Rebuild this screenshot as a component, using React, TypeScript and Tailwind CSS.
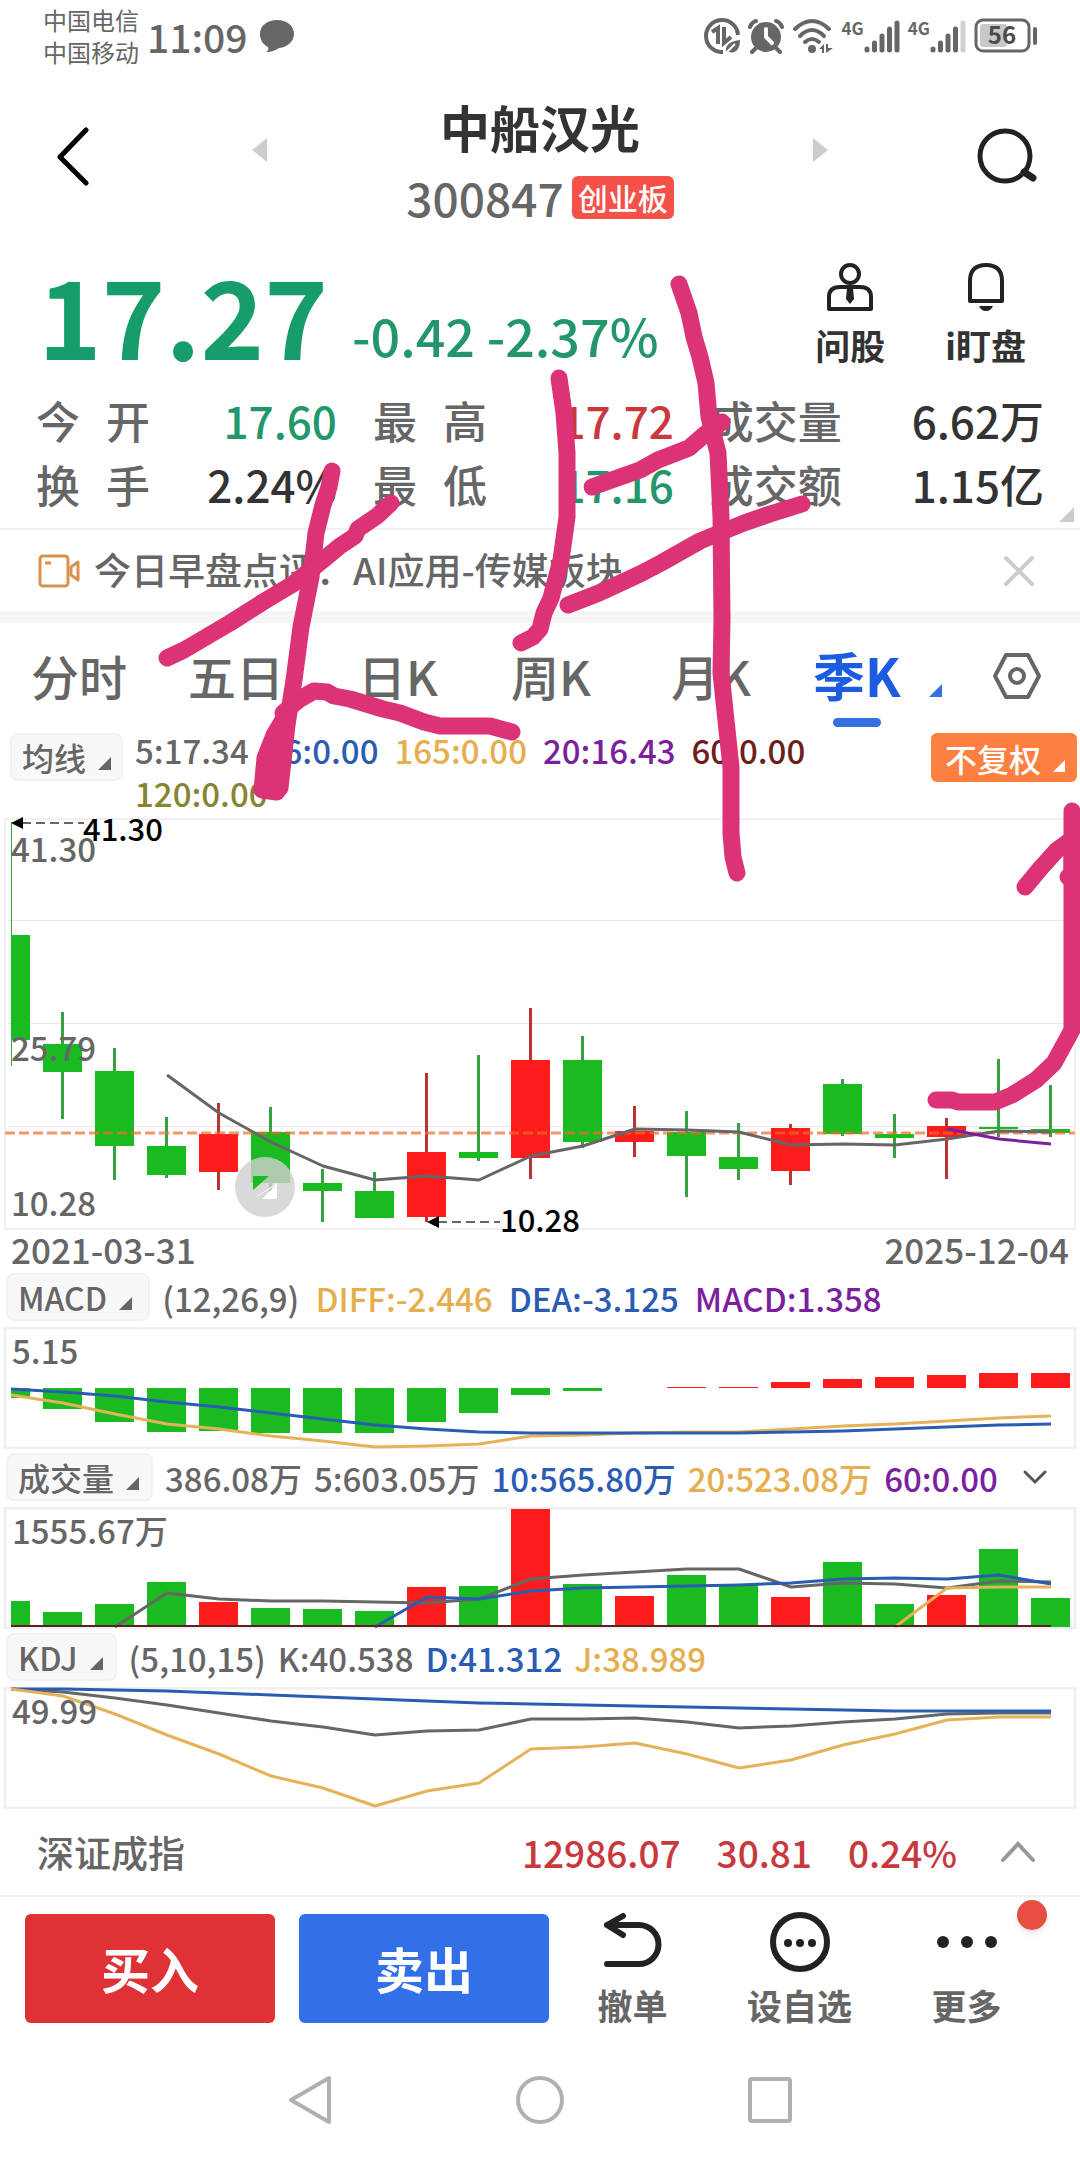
import React from "react";

const GREEN = "#19bb20";
const RED = "#fb1c1b";
const GRAY = "#666666";
const BLUE = "#2a5cb4";
const GOLD = "#e5b25a";
const PURPLE = "#7c1f9e";

const STEP = 52;
const cx = (i: number) => 11 + STEP * i;

// [wick top, body top, body bottom, wick bottom, rising]
const candles: [number, number, number, number, boolean][] = [
  [822, 935, 1040, 1066, false],
  [1012, 1044, 1072, 1119, false],
  [1048, 1071, 1146, 1180, false],
  [1117, 1146, 1175, 1178, false],
  [1103, 1134, 1172, 1190, true],
  [1107, 1132, 1183, 1195, false],
  [1169, 1183, 1191, 1222, false],
  [1172, 1191, 1218, 1218, false],
  [1073, 1152, 1217, 1222, true],
  [1055, 1152, 1158, 1161, false],
  [1008, 1060, 1158, 1179, true],
  [1036, 1060, 1142, 1148, false],
  [1106, 1131, 1142, 1157, true],
  [1111, 1132, 1156, 1197, false],
  [1123, 1157, 1169, 1180, false],
  [1124, 1128, 1171, 1185, true],
  [1079, 1084, 1134, 1136, false],
  [1114, 1134, 1138, 1158, false],
  [1118, 1126, 1137, 1179, true],
  [1059, 1127, 1129, 1137, false],
  [1085, 1129, 1133, 1137, false],
];

const macdBars = [1398, 1409, 1422, 1432, 1431, 1433, 1433, 1433, 1422, 1413, 1395, 1391, 1388, 1387, 1387, 1382, 1379, 1377, 1375, 1373, 1373];
const volumeTops = [1601, 1612, 1604, 1582, 1602, 1608, 1609, 1611, 1587, 1586, 1509, 1584, 1596, 1575, 1585, 1597, 1562, 1604, 1595, 1549, 1598];

function points(ys: number[], start = 0) {
  return ys.map((y, i) => `${cx(i + start)},${y}`).join(" ");
}

function Line({ ys, start = 0, color }: { ys: number[]; start?: number; color: string }) {
  return <polyline points={points(ys, start)} fill="none" stroke={color} strokeWidth={3} strokeLinejoin="round" />;
}

function barBox(i: number) {
  return i === 0 ? { x: 11, width: 19 } : { x: cx(i) - 20, width: 39 };
}

function Corner({ className }: { className: string }) {
  return (
    <svg viewBox="0 0 12 12" className={className} aria-hidden="true">
      <path d="M12 0V12H0Z" fill="currentColor" />
    </svg>
  );
}

function Picker({ children, pad = "px-2.5" }: { children: string; pad?: string }) {
  return (
    <button
      type="button"
      className={`flex h-12 shrink-0 items-center gap-3 rounded-lg border-2 border-[#f2f2f2] bg-[#f8f8f8] text-[32px] leading-none text-[#666] ${pad}`}
    >
      {children}
      <Corner className="mt-3 size-[13px]" />
    </button>
  );
}

function Signal({ weak = false }: { weak?: boolean }) {
  return (
    <div className="flex items-start">
      <span className="text-[17px] font-bold leading-none">4G</span>
      <svg viewBox="0 0 36 34" className="h-[34px] w-9" aria-hidden="true">
        <g stroke="#666" strokeWidth="5" strokeLinecap="round">
          <path d="M3 30V31M10.500 24V31M18 17V31M25.500 10V31" />
          <path d="M33 4V31" stroke={weak ? "#d0d0d0" : "#666"} />
        </g>
      </svg>
    </div>
  );
}

function StatusBar() {
  return (
    <div className="flex h-[72px] items-center justify-between pl-[43px] pr-[42px] text-[#666]">
      <div className="flex items-center">
        <div className="text-[24px] font-normal leading-8">
          <div>中国电信</div>
          <div>中国移动</div>
        </div>
        <span className="ml-2 text-[39px] leading-none">11:09</span>
        <svg viewBox="0 0 34 34" className="ml-3 size-[34px]" aria-hidden="true">
          <path d="M17 1C8 1 0 6 0 15C0 22 4 26 8 28C9 30 8 32 6 33C12 33 16 31 19 29C28 28 34 22 34 15C34 6 26 1 17 1Z" fill="#666" />
        </svg>
      </div>
      <div className="flex items-center gap-2">
        <svg viewBox="0 0 36 36" className="size-9" aria-hidden="true">
          <path d="M19 34A16 16 0 1 1 34 17" fill="none" stroke="#666" strokeWidth="4" />
          <path d="M8 14L14 10V26M20 9V25L27 19" fill="none" stroke="#666" strokeWidth="4" />
          <path d="M22 34C21 26 27 23 36 22C36 31 32 36 25 34Z" fill="#666" />
          <path d="M21 36L31 26" stroke="#fff" strokeWidth="2" />
        </svg>
        <svg viewBox="0 0 36 36" className="size-9" aria-hidden="true">
          <circle cx="18" cy="19" r="15" fill="#666" />
          <path d="M18 11V19L24 25" fill="none" stroke="#fff" strokeWidth="4" strokeLinecap="round" />
          <path d="M2 9Q4 4 8 3M34 9Q32 4 28 3M8 30L4 34M28 30L32 34" stroke="#666" strokeWidth="4" strokeLinecap="round" fill="none" />
        </svg>
        <svg viewBox="0 0 42 36" className="h-9 w-[42px]" aria-hidden="true">
          <g fill="none" stroke="#666" strokeWidth="4" strokeLinecap="round">
            <path d="M3 11Q20 -5 37 11" />
            <path d="M8 18Q20 6 32 18" />
            <path d="M13 24Q20 18 27 24" />
          </g>
          <circle cx="20" cy="31" r="4" fill="#666" />
          <path d="M27 31L32 26V35H30V31ZM34 26H36V30H41L34 35Z" fill="#666" />
        </svg>
        <Signal />
        <Signal weak />
        <svg viewBox="0 0 64 36" className="h-9 w-16 overflow-visible" aria-label="56">
          <rect x="2" y="2" width="53" height="31" rx="7" fill="none" stroke="#666" strokeWidth="3" />
          <rect x="6" y="6" width="27" height="23" rx="3" fill="#c8c8c8" />
          <path d="M61 11V25" stroke="#666" strokeWidth="4" strokeLinecap="round" />
          <text x="28" y="26" textAnchor="middle" fontSize="24" fontWeight="700" fill="#4c4c4c">56</text>
        </svg>
      </div>
    </div>
  );
}

function Header() {
  return (
    <header className="flex h-[174px] items-start justify-between pl-[54px] pr-[40px] pt-0.5">
      <button type="button" aria-label="返回" className="mt-[52px]">
        <svg viewBox="0 0 38 60" className="h-[60px] w-[38px]" fill="none" stroke="#000" strokeWidth="5" strokeLinecap="round" strokeLinejoin="round">
          <path d="M32 4L6 31L32 57" />
        </svg>
      </button>
      <button type="button" aria-label="上一只" className="ml-5 mt-[64px]">
        <svg viewBox="0 0 15 24" className="h-6 w-[15px]"><path d="M15 0V24L0 12Z" fill="#ccc" /></svg>
      </button>
      <div className="flex flex-col items-center pt-6">
        <h1 className="text-[50px] font-bold leading-[56px] text-[#333]">中船汉光</h1>
        <div className="mt-[21px] flex items-center gap-2">
          <span className="text-[46px] leading-[44px] text-[#666]">300847</span>
          <span className="flex h-[43px] items-center rounded-md bg-[#f45149] px-1.5 text-[30px] leading-none text-white">创业板</span>
        </div>
      </div>
      <button type="button" aria-label="下一只" className="mr-2 mt-[64px]">
        <svg viewBox="0 0 15 24" className="h-6 w-[15px]"><path d="M0 0V24L15 12Z" fill="#ccc" /></svg>
      </button>
      <button type="button" aria-label="搜索" className="mt-[53px]">
        <svg viewBox="0 0 64 60" className="h-[60px] w-16" fill="none" stroke="#222" strokeWidth="5" strokeLinecap="round">
          <circle cx="29" cy="29" r="25" />
          <path d="M48 45L57 51" strokeWidth="7" />
        </svg>
      </button>
    </header>
  );
}

const stats: [string[], string, string][] = [
  [["今", "开"], "17.60", "text-[#24976a]"],
  [["最", "高"], "17.72", "text-[#c8383c]"],
  [["成交量"], "6.62万", "text-[#333]"],
  [["换", "手"], "2.24%", "text-[#333]"],
  [["最", "低"], "17.16", "text-[#24976a]"],
  [["成交额"], "1.15亿", "text-[#333]"],
];

function Quote() {
  return (
    <section className="relative h-[284px] border-b-2 border-[#f0f0f0]">
      <div className="flex h-[142px] items-start justify-between pl-[38px] pr-[54px]">
        <div className="flex items-end">
          <span className="text-[108px] font-bold leading-[134px] text-[#169d6a]">17.27</span>
          <span className="mb-1 ml-6 text-[52px] leading-[82px] text-[#24976a]">-0.42 -2.37%</span>
        </div>
        <div className="flex gap-[60px] pt-4 text-[35px] font-bold leading-[50px] text-[#333]">
          <button type="button" className="flex flex-col items-center gap-2">
            <svg viewBox="0 0 46 50" className="h-[50px] w-[46px]" fill="none" stroke="#222" strokeWidth="4">
              <circle cx="23" cy="12" r="9" />
              <path d="M2 47V35Q2 25 13 25H33Q44 25 44 35V47Z" strokeLinejoin="round" />
              <path d="M20 26H26L27 37L23 42L19 37Z" fill="#222" stroke="none" />
            </svg>
            问股
          </button>
          <button type="button" className="flex flex-col items-center gap-2">
            <svg viewBox="0 0 38 50" className="h-[50px] w-[38px]" fill="none" stroke="#222" strokeWidth="4" strokeLinejoin="round">
              <path d="M3 39V19Q3 3 19 3Q35 3 35 19V39Z" />
              <path d="M12 44H26Q24 49 19 49Q14 49 12 44Z" fill="#222" stroke="none" />
            </svg>
            i盯盘
          </button>
        </div>
      </div>
      <dl className="grid grid-cols-[299fr_299fr_332fr] gap-x-9 px-9 text-[44px] leading-[64px]">
        {stats.map(([k, v, c]) => (
          <div key={k.join("")} className="flex justify-between whitespace-nowrap">
            <dt className="flex gap-[26px] text-[#666]">
              {k.map((s) => <span key={s}>{s}</span>)}
            </dt>
            <dd className={c}>{v}</dd>
          </div>
        ))}
      </dl>
      <Corner className="absolute bottom-1.5 right-1.5 size-[15px] text-[#ccc]" />
    </section>
  );
}

function Notice() {
  return (
    <section className="flex h-[81px] items-center pl-[38px] pr-[45px]">
      <svg viewBox="0 0 42 34" className="h-[34px] w-[42px]" fill="none" stroke="#d9914f" strokeWidth="3" strokeLinejoin="round">
        <rect x="2" y="2" width="28" height="30" rx="3" />
        <path d="M7 9H13M33 13L40 8V26L33 21Z" />
      </svg>
      <a href="#" className="ml-3.5 flex-1 pb-1 text-[37px] leading-[48px] text-[#666]">今日早盘点评：AI应用-传媒板块</a>
      <button type="button" aria-label="关闭">
        <svg viewBox="0 0 32 32" className="size-8" stroke="#ccc" strokeWidth="4" strokeLinecap="round">
          <path d="M3 3L29 29M29 3L3 29" />
        </svg>
      </button>
    </section>
  );
}

function Tabs() {
  return (
    <nav className="grid h-[122px] grid-cols-[157fr_170fr_153fr_160fr_142fr_179fr_50fr] items-start border-t-[12px] border-[#f5f5f5] pl-[31px] pr-[38px] pt-[17px] text-[48px] leading-[70px] text-[#666]">
      {["分时", "五日", "日K", "周K", "月K"].map((t) => (
        <button key={t} type="button" className="justify-self-start">{t}</button>
      ))}
      <button type="button" className="flex items-end gap-7 justify-self-start text-[52px] font-bold text-[#1c5ce0]">
        <span className="flex flex-col items-center">
          季K
          <span className="mt-2 h-[9px] w-12 rounded-full bg-[#366fdf]" />
        </span>
        <Corner className="mb-[30px] size-[13px] text-[#366fdf]" />
      </button>
      <button type="button" aria-label="设置" className="mt-3">
        <svg viewBox="0 0 50 48" className="h-12 w-[50px]" fill="none" stroke="#666" strokeWidth="4" strokeLinejoin="round">
          <path d="M14 3H36L47 24L36 45H14L3 24Z" />
          <circle cx="25" cy="24" r="7" />
        </svg>
      </button>
    </nav>
  );
}

function MaRow() {
  return (
    <div className="flex h-[85px] items-start justify-between pl-2.5 pr-[3px]">
      <div className="flex">
        <Picker>均线</Picker>
        <div className="-mt-1 ml-3 flex max-w-[760px] flex-wrap gap-x-4 text-[33px] leading-[43px]">
          <span className="text-[#666]">5:17.34</span>
          <span className="text-[#2a5cb4]">26:0.00</span>
          <span className="text-[#e5ae4f]">165:0.00</span>
          <span className="text-[#7c1f9e]">20:16.43</span>
          <span className="text-[#6e1d1d]">60:0.00</span>
          <span className="text-[#858532]">120:0.00</span>
        </div>
      </div>
      <button type="button" className="flex h-[49px] items-center gap-3 rounded-md bg-[#fe8040] pl-3.5 pr-3 text-[32px] leading-none text-white">
        不复权
        <Corner className="mt-4 size-3" />
      </button>
    </div>
  );
}

function PriceChart() {
  return (
    <svg viewBox="0 818 1080 412" className="block h-auto w-full overflow-visible" role="img" aria-label="季K线图">
      <rect x="5" y="819" width="1070" height="410" fill="none" stroke="#f0f0f0" strokeWidth="2" />
      <path d="M8 920.500H1073M8 1023.500H1073M8 1126.500H1073" stroke="#e6e6e6" />
      {candles.map(([wt, bt, bb, wb, up], i) => (
        <g key={i}>
          <path d={`M${i ? cx(i) - 0.5 : 11.5} ${wt}V${wb}`} stroke={up ? "#b93434" : "#38a043"} strokeWidth={i ? 3 : 1} />
          <rect {...barBox(i)} y={bt} height={bb - bt} fill={up ? RED : GREEN} />
        </g>
      ))}
      <path d="M5 1133H1075" stroke="#ef6a2a" strokeOpacity="0.700" strokeWidth="3" strokeDasharray="10 4" />
      <Line start={3} color={GRAY} ys={[1075, 1113, 1142, 1166, 1180, 1176, 1180, 1156, 1146, 1129, 1130, 1132, 1145, 1144, 1145, 1139, 1131, 1132]} />
      <Line start={18} color={PURPLE} ys={[1129, 1139, 1144]} />
      <g fontSize="33" fill={GRAY}>
        <text x="11" y="862">41.30</text>
        <text x="11" y="1061">25.79</text>
        <text x="11" y="1216">10.28</text>
      </g>
      <g stroke={GRAY} strokeWidth="2" strokeDasharray="9 5">
        <path d="M22 823H84M438 1222H500" />
      </g>
      <path d="M11 823L23 817V829ZM427 1222L439 1216V1228Z" />
      <g fontSize="31">
        <text x="83" y="841">41.30</text>
        <text x="500" y="1232">10.28</text>
      </g>
      <circle cx="265" cy="1187" r="30" fill="#d0d0d0" fillOpacity="0.800" />
      <path d="M253 1199L277 1183V1199H262L276 1185" fill="#fff" />
      <path d="M253 1176H269L253 1190Z" fill={GREEN} />
    </svg>
  );
}

function PanelHead({ name, values, pad, gap, more }: { name: string; values: [string, string][]; pad: string; gap: string; more?: boolean }) {
  return (
    <div className="flex h-[54px] items-start pl-1.5">
      <Picker pad={pad}>{name}</Picker>
      <div className={`ml-3 flex whitespace-nowrap text-[33px] leading-[50px] ${gap}`}>
        {values.map(([v, c]) => <span key={v} className={c}>{v}</span>)}
      </div>
      {more && (
        <button type="button" aria-label="展开" className="ml-auto mr-8 mt-4">
          <svg viewBox="0 0 26 16" className="h-4 w-[26px]" fill="none" stroke="#555" strokeWidth="3" strokeLinecap="round"><path d="M3 3L13 13L23 3" /></svg>
        </button>
      )}
    </div>
  );
}

function Panel({ top, label, viewBox, children }: { top: number; label: string; viewBox: string; children: React.ReactNode }) {
  return (
    <svg viewBox={viewBox} className="mb-1 block h-auto w-full" role="img" aria-label={label}>
      <rect x="5" y={top} width="1070" height="120" fill="none" stroke="#f0f0f0" strokeWidth="3" />
      {children}
      <text x="12" y={top + 36} fontSize="33" fill={GRAY}>{label}</text>
    </svg>
  );
}

function Indicators() {
  return (
    <>
      <div className="flex h-[43px] justify-between px-[11px] text-[35px] leading-[38px] text-[#666]">
        <time>2021-03-31</time>
        <time>2025-12-04</time>
      </div>
      <PanelHead
        name="MACD"
        pad="pl-2.5 pr-4"
        gap="gap-x-4"
        values={[["(12,26,9)", "text-[#666]"], ["DIFF:-2.446", "text-[#e5ae4f]"], ["DEA:-3.125", "text-[#2a5cb4]"], ["MACD:1.358", "text-[#7c1f9e]"]]}
      />
      <Panel top={1328} label="5.15" viewBox="0 1327 1080 122">
        {macdBars.map((y, i) => {
          if (i === 12) return null;
          const up = y < 1388;
          return <rect key={i} {...barBox(i)} y={up ? y : 1388} height={Math.abs(y - 1388)} fill={up ? RED : GREEN} />;
        })}
        <Line color={GOLD} ys={[1395, 1403, 1414, 1424, 1429, 1436, 1441, 1447, 1446, 1444, 1436, 1435, 1433, 1432, 1432, 1429, 1426, 1424, 1421, 1418, 1416]} />
        <Line color={BLUE} ys={[1389, 1392, 1396, 1402, 1407, 1413, 1419, 1425, 1429, 1432, 1433, 1433, 1433, 1433, 1433, 1432, 1431, 1429, 1427, 1425, 1424]} />
      </Panel>
      <PanelHead
        name="成交量"
        pad="pl-2.5 pr-3"
        gap="gap-x-3"
        values={[["386.08万", "text-[#666]"], ["5:603.05万", "text-[#666]"], ["10:565.80万", "text-[#2a5cb4]"], ["20:523.08万", "text-[#e5ae4f]"], ["60:0.00", "text-[#7c1f9e]"]]}
        more
      />
      <Panel top={1508} label="1555.67万" viewBox="0 1507 1080 122">
        {volumeTops.map((y, i) => (
          <rect key={i} {...barBox(i)} y={y} height={1627 - y} fill={[4, 8, 10, 12, 15, 18].includes(i) ? RED : GREEN} />
        ))}
        <Line start={2} color={GRAY} ys={[1627, 1593, 1599, 1601, 1601, 1602, 1603, 1599, 1579, 1575, 1572, 1569, 1569, 1587, 1583, 1584, 1588, 1581, 1582]} />
        <Line start={7} color={BLUE} ys={[1627, 1597, 1599, 1591, 1588, 1587, 1586, 1585, 1583, 1579, 1578, 1579, 1575, 1584]} />
        <Line start={17} color={GOLD} ys={[1627, 1588, 1587, 1587]} />
        <path d="M11 1626H1051" stroke="#5c2020" strokeWidth="2" />
      </Panel>
      <PanelHead
        name="KDJ"
        pad="pl-2.5 pr-3"
        gap="gap-x-3"
        values={[["(5,10,15)", "text-[#666]"], ["K:40.538", "text-[#666]"], ["D:41.312", "text-[#2a5cb4]"], ["J:38.989", "text-[#e5ae4f]"]]}
      />
      <Panel top={1688} label="49.99" viewBox="0 1687 1080 122">
        <Line color={GRAY} ys={[1689, 1692, 1698, 1705, 1713, 1721, 1727, 1735, 1731, 1730, 1719, 1719, 1718, 1722, 1728, 1726, 1722, 1719, 1714, 1713, 1713]} />
        <Line color={BLUE} ys={[1689, 1689, 1690, 1691, 1693, 1695, 1697, 1699, 1701, 1703, 1704, 1705, 1706, 1707, 1708, 1709, 1710, 1711, 1711, 1711, 1711]} />
        <Line color={GOLD} ys={[1689, 1696, 1714, 1735, 1754, 1776, 1788, 1806, 1791, 1783, 1749, 1747, 1743, 1754, 1768, 1760, 1745, 1734, 1720, 1717, 1717]} />
      </Panel>
    </>
  );
}

function IndexRow() {
  return (
    <div className="flex h-[84px] items-center border-b-2 border-[#f0f0f0] pb-1 pl-[37px] pr-[44px] text-[37px] leading-none text-[#666]">
      <span>深证成指</span>
      <div className="ml-auto flex gap-9 text-[#c8383c]">
        <span>12986.07</span>
        <span>30.81</span>
        <span>0.24%</span>
      </div>
      <button type="button" aria-label="展开指数" className="ml-[43px]">
        <svg viewBox="0 0 36 22" className="h-[22px] w-9" fill="none" stroke="#999" strokeWidth="4" strokeLinecap="round"><path d="M3 19L18 3L33 19" /></svg>
      </button>
    </div>
  );
}

function ActionBar() {
  return (
    <div className="flex h-[140px] items-start pl-[25px] pr-[30px] pt-[17px]">
      <div className="flex w-[524px] shrink-0 gap-6 text-[49px] font-bold text-white">
        <button type="button" className="h-[109px] flex-1 rounded-md bg-[#df3236] pb-0.5">买入</button>
        <button type="button" className="h-[109px] flex-1 rounded-md bg-[#336fe6] pb-0.5">卖出</button>
      </div>
      <div className="-mt-0.5 grid flex-1 grid-cols-3 text-[35px] font-bold leading-[50px] text-[#666]">
        <button type="button" className="flex flex-col items-center">
          <svg viewBox="0 0 58 60" className="h-[60px] w-[58px]" fill="none" stroke="#222" strokeWidth="6" strokeLinecap="round" strokeLinejoin="round">
            <path d="M19 4L3 13L19 23M3 13H35A19 19 0 0 1 35 52H3" />
          </svg>
          <span className="mt-2">撤单</span>
        </button>
        <button type="button" className="flex flex-col items-center">
          <svg viewBox="0 0 60 60" className="h-[60px] w-[60px]" fill="#222">
            <circle cx="30" cy="30" r="27" fill="none" stroke="#222" strokeWidth="6" />
            <circle cx="18" cy="31" r="4" /><circle cx="30" cy="31" r="4" /><circle cx="42" cy="31" r="4" />
          </svg>
          <span className="mt-2">设自选</span>
        </button>
        <button type="button" className="relative flex flex-col items-center">
          <svg viewBox="0 0 60 60" className="h-[60px] w-[60px]" fill="#222">
            <circle cx="6" cy="30" r="6" /><circle cx="30" cy="30" r="6" /><circle cx="54" cy="30" r="6" />
          </svg>
          <span className="mt-2">更多</span>
          <span className="absolute -top-3 right-[3px] size-[30px] rounded-full bg-[#e74f40] shadow-md" />
        </button>
      </div>
    </div>
  );
}

function SystemNav() {
  return (
    <nav className="flex h-[124px] items-center justify-center gap-[183px] pt-0.5" aria-label="系统导航">
      <button type="button" aria-label="后退">
        <svg viewBox="0 0 44 50" className="h-[50px] w-11" fill="none" stroke="#b0b0b0" strokeWidth="4" strokeLinejoin="round"><path d="M41 3V47L3 25Z" /></svg>
      </button>
      <button type="button" aria-label="主页">
        <svg viewBox="0 0 50 50" className="size-[50px]" fill="none" stroke="#b0b0b0" strokeWidth="4"><circle cx="25" cy="25" r="22" /></svg>
      </button>
      <button type="button" aria-label="最近">
        <svg viewBox="0 0 44 50" className="h-[50px] w-11" fill="none" stroke="#b0b0b0" strokeWidth="4"><rect x="2" y="4" width="40" height="42" rx="2" /></svg>
      </button>
    </nav>
  );
}

function Scribble() {
  return (
    <svg viewBox="0 0 1080 2160" className="pointer-events-none absolute left-0 top-0 h-auto w-full" fill="none" stroke="#db3375" strokeWidth="17" strokeLinecap="round" strokeLinejoin="round" aria-hidden="true">
      <path d="M332 471L329 487L323 505L316 533L311 577L301 627L294 680L287 725L280 788" />
      <path d="M287 713L274 735L265 758L262 790L277 792L280 750Z" fill="#db3375" />
      <path d="M167 658L184 650L230 623L263 602L293 584L323 560L340 546L355 536L358 529L377 516L391 503" />
      <path d="M283 713L300 699L314 691L327 692L334 696L350 699L383 709L400 713L424 722L440 726L490 726L512 732" />
      <path d="M559 378L564 413L567 453V517L561 560L551 598L544 613L540 629L533 637L521 643" />
      <path d="M679 284L689 313L694 337L700 357L706 383L709 417L718 453L721 517L722 620L721 673L727 730L731 767V833L733 857L737 873" />
      <path d="M592 487L640 470L658 460L689 448L704 435L722 422" />
      <path d="M568 605L599 593L640 574L661 563L700 541L744 523L770 514L802 504" />
      <path d="M936 1100H952L958 1102H995L1012 1095L1036 1080L1054 1063L1072 1030V811" />
      <path d="M1025 887L1039 870L1057 850L1072 839V877L1068 877" />
    </svg>
  );
}

export default function App() {
  return (
    <div className='relative w-full overflow-hidden bg-white font-["Noto_Sans_CJK_SC",sans-serif] font-medium'>
      <StatusBar />
      <Header />
      <main>
        <Quote />
        <Notice />
        <Tabs />
        <MaRow />
        <PriceChart />
        <Indicators />
      </main>
      <IndexRow />
      <ActionBar />
      <SystemNav />
      <Scribble />
    </div>
  );
}
